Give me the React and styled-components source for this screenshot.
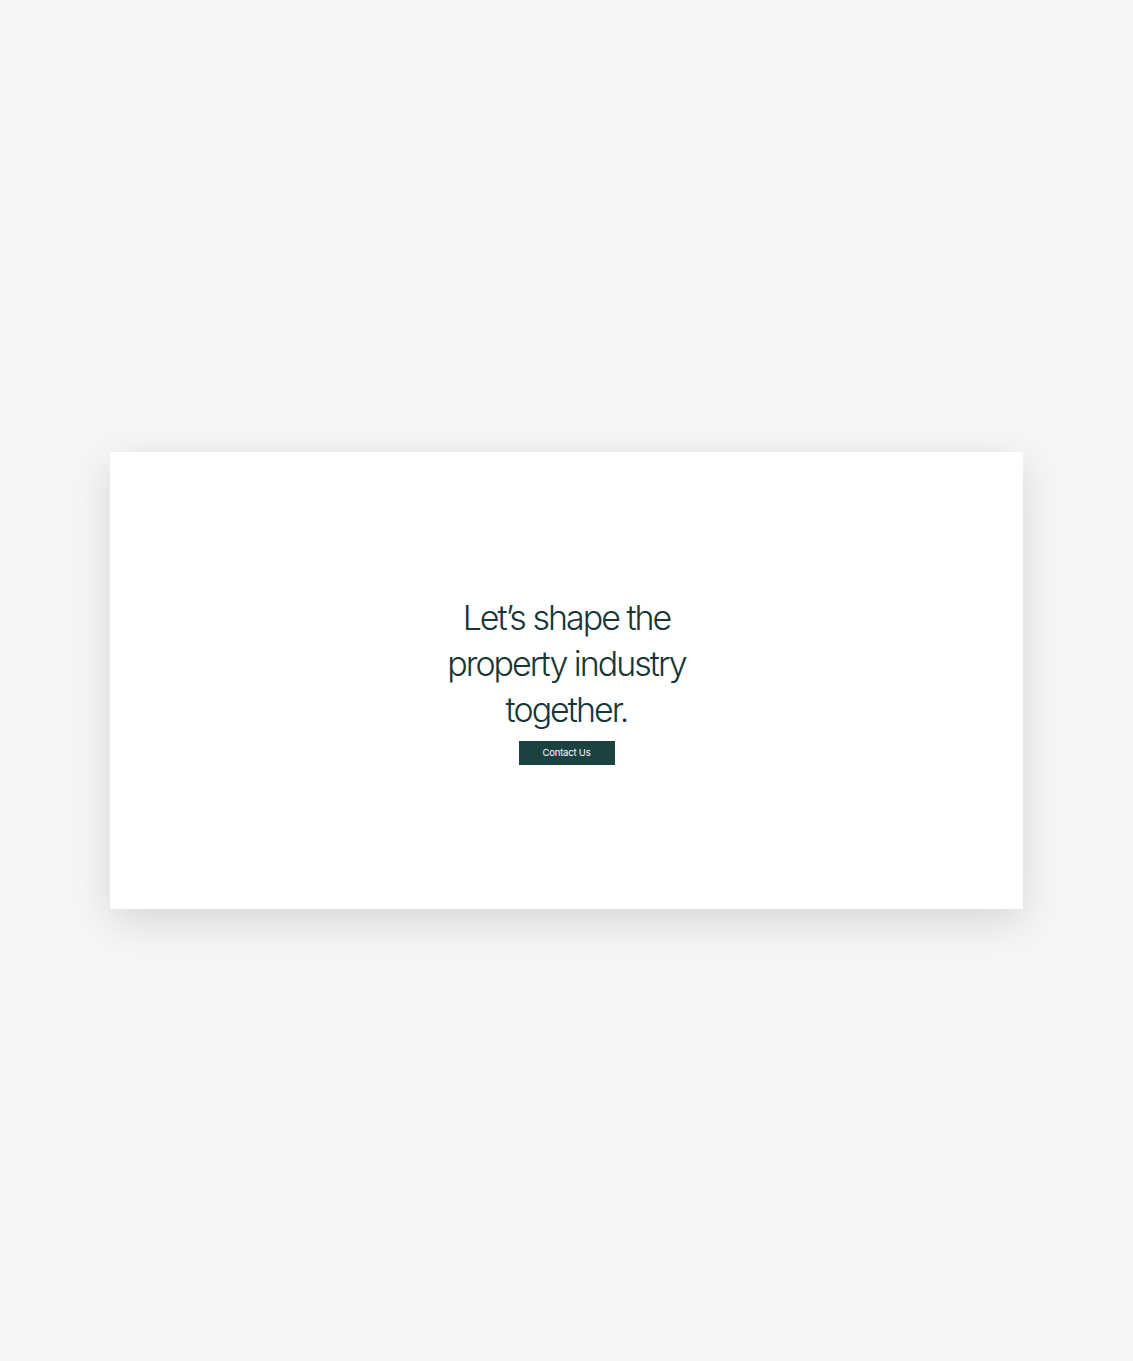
import React from 'react'
import styled, { createGlobalStyle } from 'styled-components'

const GlobalStyle = createGlobalStyle`
  body {
    margin: 0;
    background: #f6f6f6;
    font-family: Inter, "Noto Sans", sans-serif;
  }
`

const Page = styled.div`
  min-height: 1361px;
  display: flex;
  align-items: center;
  justify-content: center;
`

const Card = styled.section`
  box-sizing: border-box;
  width: 913px;
  height: 457px;
  padding-bottom: 2px;
  background: #ffffff;
  box-shadow: 0 12px 40px rgba(0, 0, 0, 0.13);
  display: flex;
  flex-direction: column;
  align-items: center;
  justify-content: center;
`

const Heading = styled.h2`
  margin: 0;
  width: 260px;
  text-align: center;
  font-size: 34px;
  font-weight: 300;
  line-height: 46px;
  letter-spacing: -2px;
  color: #173636;
`

const Button = styled.button`
  margin-top: 8px;
  width: 96px;
  height: 24px;
  border: none;
  background: #1b4141;
  color: #ffffff;
  font-family: Inter, sans-serif;
  font-size: 9.5px;
  letter-spacing: -0.2px;
  cursor: pointer;
`

export default function App() {
  return (
    <>
      <GlobalStyle />
      <Page>
        <Card>
          <Heading>Let’s shape the property industry together.</Heading>
          <Button>Contact Us</Button>
        </Card>
      </Page>
    </>
  )
}
